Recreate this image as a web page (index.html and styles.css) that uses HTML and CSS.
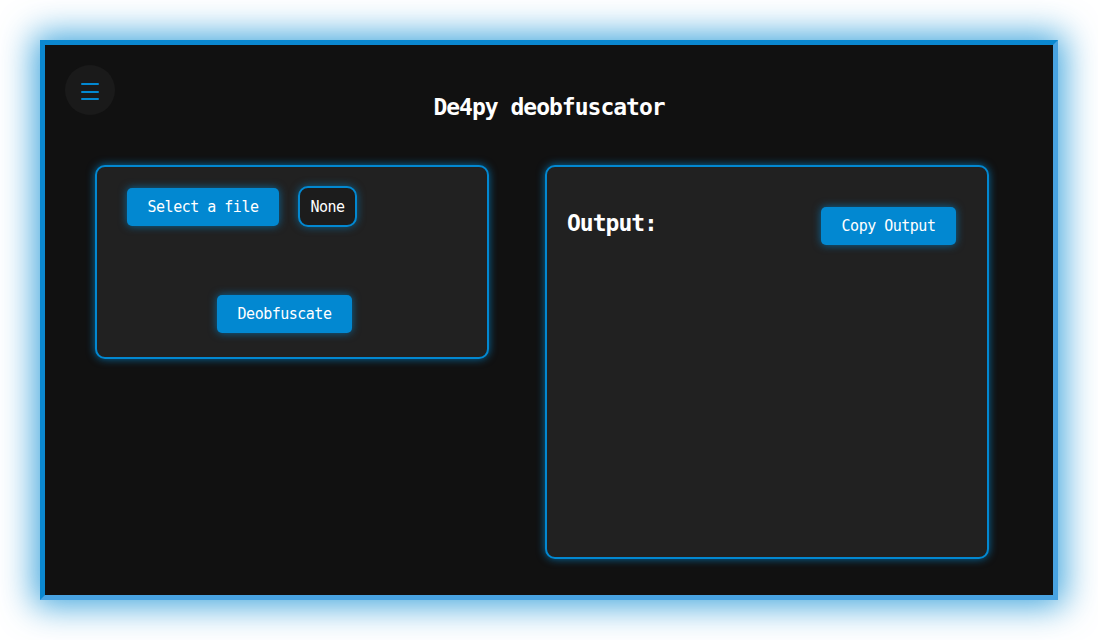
FILE: index.html
```html
<!DOCTYPE html>
<html lang="en">
<head>
<meta charset="utf-8">
<title>De4py deobfuscator</title>
<link rel="stylesheet" href="styles.css">
</head>
<body>
<div class="frame">
  <button class="menu-toggle" aria-label="Menu">
    <span class="bar"></span><span class="bar"></span><span class="bar"></span>
  </button>
  <h1 class="title">De4py deobfuscator</h1>
  <div class="panels">
    <section class="card card-input">
      <div class="file-row">
        <button class="btn btn-select">Select a file</button>
        <div class="file-name">None</div>
      </div>
      <div class="action-row">
        <button class="btn btn-deob">Deobfuscate</button>
      </div>
    </section>
    <section class="card card-output">
      <div class="output-head">
        <h2 class="output-label">Output:</h2>
        <button class="btn btn-copy">Copy Output</button>
      </div>
    </section>
  </div>
</div>
</body>
</html>
```
FILE: styles.css
```css
html, body {
  margin: 0;
  padding: 0;
  background: #ffffff;
}
body {
  padding: 40px;
  font-family: "DejaVu Sans Mono", "Liberation Mono", monospace;
  color: #ffffff;
}
.frame {
  position: relative;
  width: 1018px;
  height: 560px;
  box-sizing: border-box;
  background: #111111;
  border: 5px solid #0b88d0;
  border-right-color: #49a3e1;
  border-bottom-color: #49a3e1;
  box-shadow: 0 0 32px 6px rgba(2, 136, 209, 0.75);
  padding-top: 48px;
}
.menu-toggle {
  position: absolute;
  top: 20px;
  left: 20px;
  width: 50px;
  height: 50px;
  border: none;
  border-radius: 50%;
  background: #1a1a1a;
  padding: 0;
  display: flex;
  flex-direction: column;
  align-items: center;
  justify-content: center;
  gap: 5.5px;
  padding-top: 3px;
}
.menu-toggle .bar {
  display: block;
  width: 18px;
  height: 2px;
  background: #0288d1;
  border-radius: 1px;
}
.title {
  margin: 0;
  text-align: center;
  font-size: 23px;
  line-height: 28px;
  letter-spacing: -1px;
  font-weight: bold;
  color: #ffffff;
}
.panels {
  display: flex;
  align-items: flex-start;
  gap: 56px;
  margin-top: 44px;
  padding-left: 50px;
}
.card {
  box-sizing: border-box;
  background: #212121;
  border: 2px solid #0288d1;
  border-radius: 10px;
  box-shadow: 0 0 9px rgba(2, 136, 209, 0.75);
}
.card-input {
  width: 394px;
  height: 194px;
  padding: 19px 0 0 30px;
}
.card-output {
  width: 444px;
  height: 394px;
  padding: 40px 31px 0 20px;
}
.file-row {
  display: flex;
  align-items: center;
  gap: 19px;
}
.btn {
  box-sizing: border-box;
  height: 38px;
  border: none;
  border-radius: 5px;
  background: #0288d1;
  color: #ffffff;
  font-family: "DejaVu Sans Mono", "Liberation Mono", monospace;
  font-size: 15px;
  letter-spacing: -0.5px;
  padding: 0;
  box-shadow: 0 0 8px rgba(2, 136, 209, 0.7);
}
.btn-select {
  width: 152px;
}
.file-name {
  box-sizing: border-box;
  width: 59px;
  height: 41px;
  border: 2px solid #0288d1;
  border-radius: 10px;
  background: #1c1c1c;
  display: flex;
  align-items: center;
  justify-content: center;
  font-size: 15px;
  letter-spacing: -0.5px;
  font-weight: normal;
  box-shadow: 0 0 8px rgba(2, 136, 209, 0.6);
}
.action-row {
  margin-top: 68px;
  padding-left: 90px;
}
.btn-deob {
  width: 135px;
}
.output-head {
  display: flex;
  justify-content: space-between;
  align-items: flex-start;
}
.output-label {
  margin: 2px 0 0 0;
  font-size: 23px;
  line-height: 28px;
  letter-spacing: -1px;
  font-weight: bold;
  color: #ffffff;
}
.btn-copy {
  width: 135px;
}
```
